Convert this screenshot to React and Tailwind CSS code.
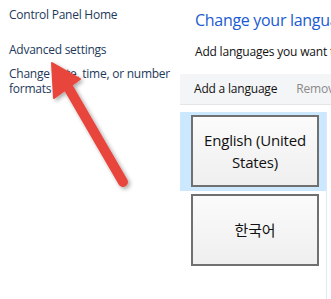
import React from 'react';

const font = { fontFamily: '"Segoe UI", "Open Sans", "Noto Sans CJK KR", sans-serif' };

const Arrow = () => (
  <svg className="absolute left-0 top-0 pointer-events-none" width="331" height="299" viewBox="0 0 331 299">
    <defs>
      <filter id="sh" x="-20%" y="-20%" width="140%" height="140%">
        <feGaussianBlur in="SourceAlpha" stdDeviation="2" />
        <feOffset dx="2" dy="2" result="b" />
        <feComponentTransfer><feFuncA type="linear" slope="0.35" /></feComponentTransfer>
        <feMerge><feMergeNode /><feMergeNode in="SourceGraphic" /></feMerge>
      </filter>
    </defs>
    <g filter="url(#sh)" fill="#e8453c" stroke="#e8453c">
      <line x1="68" y1="87" x2="123" y2="182" strokeWidth="10" strokeLinecap="round" />
      <polygon points="52,63 54,98 80,79" strokeWidth="2" strokeLinejoin="round" />
    </g>
  </svg>
);

const Tile = ({ children }) => (
  <div className="ml-[11px] w-[128px] h-[72px] border-2 border-[#707070] bg-gradient-to-b from-[#fbfbfb] to-[#efefef] flex items-center justify-center text-center text-[15px] leading-[22px] tracking-[-0.2px] text-[#111]">
    {children}
  </div>
);

export default function App() {
  return (
    <div className="relative w-[331px] h-[299px] bg-white overflow-hidden" style={font}>
      <div className="flex h-full">
        <div className="w-[180px] shrink-0 pl-[9px] text-[12px] leading-[16px] tracking-[-0.25px] text-[#1e395b]">
          <div className="pt-[7px]">Control Panel Home</div>
          <div className="mt-[19px]">Advanced settings</div>
          <div className="mt-[8px] leading-[15px]">Change date, time, or number formats</div>
        </div>
        <div className="flex-1 flex flex-col min-w-0 overflow-hidden">
          <div className="pl-[15px] pt-[9px] text-[16px] leading-[22px] tracking-[-0.3px] text-[#1a5bd2] whitespace-nowrap">Change your language preferences</div>
          <div className="pl-[15px] mt-[13px] text-[12px] leading-[16px] tracking-[-0.2px] text-[#111] whitespace-nowrap">Add languages you want to use</div>
          <div className="mt-[14px] h-[31px] bg-[#f4f5f7] border-b border-[#e3e5e8] flex items-center pl-[14px] gap-[19px] text-[12px] tracking-[-0.2px] whitespace-nowrap">
            <span className="text-[#111]">Add a language</span>
            <span className="text-[#8a8a8a]">Remove</span>
          </div>
          <div className="mt-[7px] mr-[4px] flex-1 border-r border-[#dde9f7]">
            <div className="h-[79px] bg-[#cce8ff] pt-[3px]">
              <Tile>English (United<br />States)</Tile>
            </div>
            <div className="h-[78px] pt-[3px]">
              <Tile>한국어</Tile>
            </div>
          </div>
        </div>
      </div>
      <Arrow />
    </div>
  );
}
